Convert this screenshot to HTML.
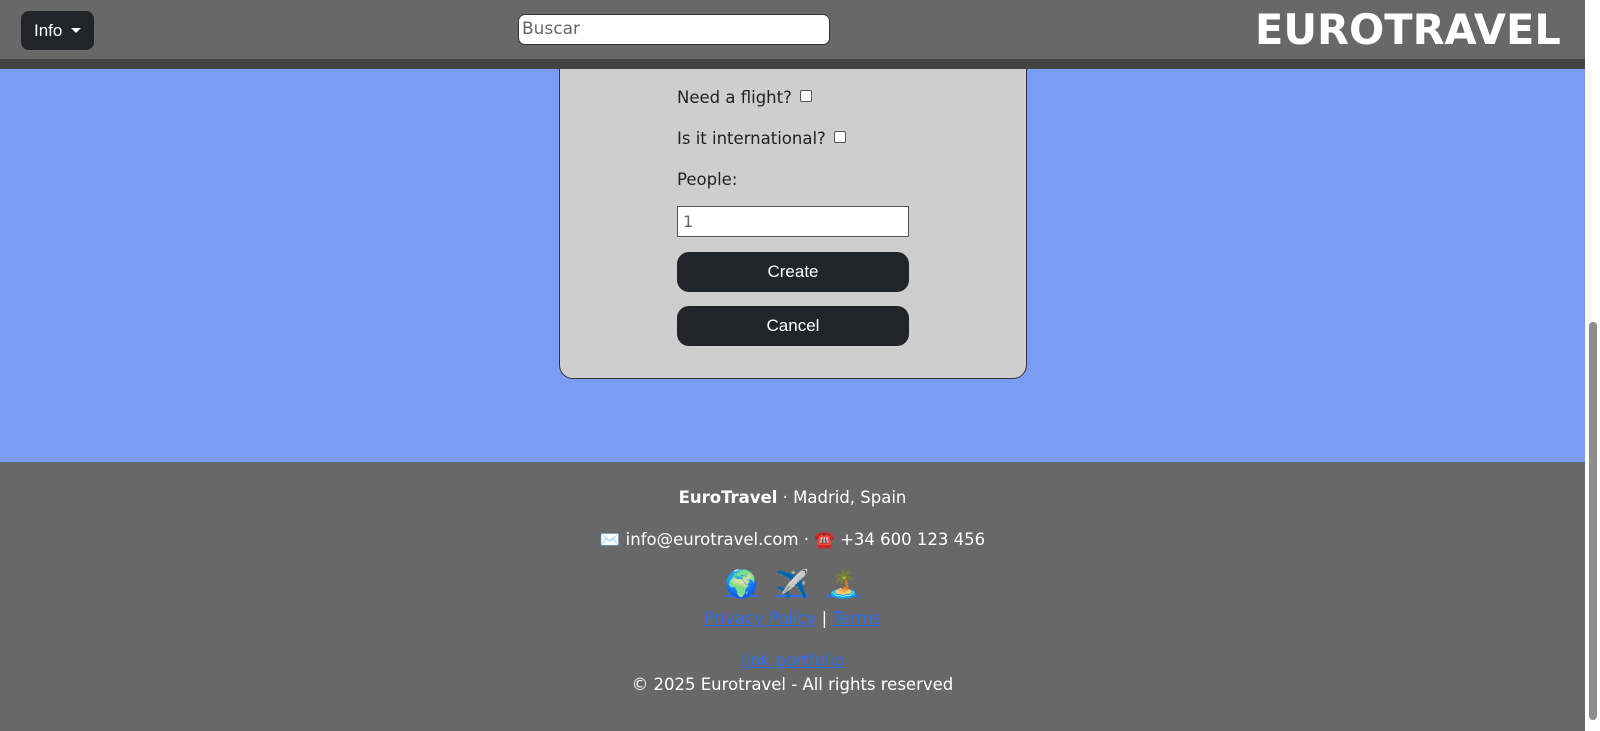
<!DOCTYPE html>
<html><head><meta charset="utf-8"><style>
*{box-sizing:border-box;margin:0;padding:0}
body{width:1600px;height:731px;overflow:hidden;position:relative;background:#7a9cf7;font-family:"DejaVu Sans",Verdana,sans-serif;}
.hdr{position:absolute;left:0;top:0;width:1585px;height:59px;background:#686868;z-index:2}
.band{position:absolute;left:0;top:59px;width:1585px;height:10px;background:#444;z-index:2}
.info{position:absolute;z-index:3;left:21px;top:11px;width:73px;height:39px;background:#212529;border-radius:8px;color:#fff;font:17px "Liberation Sans",Arial,sans-serif;line-height:39px;padding-left:13px}
.info:after{content:"";position:absolute;left:50px;top:17px;border:5px solid transparent;border-top:5px solid #fff;border-bottom:0}
.search{position:absolute;z-index:3;left:518px;top:14px;width:312px;height:31px;background:#fff;border:1px solid #333;border-radius:7px;color:#666;font-size:17px;line-height:29px;padding-left:3px}
.logo{position:absolute;z-index:3;left:1255px;top:5px;color:#fff;font:bold 41.5px "DejaVu Sans",Verdana,sans-serif;letter-spacing:0}
.card{position:absolute;left:559px;top:20px;width:468px;height:359px;background:#cecece;border:1.5px solid #333;border-radius:14px}
.t{position:absolute;left:677px;font-size:16.5px;color:#222}
.cb{display:inline-block;width:12px;height:12px;border:1px solid #555;border-radius:2px;background:#fff;vertical-align:1px;margin-left:8px}
.inp{position:absolute;left:677px;top:206px;width:232px;height:31px;background:#fff;border:1px solid #555;color:#666;font-size:16px;line-height:29px;padding-left:5px}
.btn{position:absolute;left:677px;width:232px;height:40px;background:#212529;border-radius:12px;color:#fff;text-align:center;font:17px "Liberation Sans",Arial,sans-serif;line-height:40px}
.ft{position:absolute;left:0;top:462px;width:1585px;height:269px;background:#686868;color:#fff;text-align:center;font-size:16.5px}
.ft div{position:absolute;left:0;width:100%}
a{color:#2f6ff0;text-decoration:underline}
.sb{position:absolute;left:1585px;top:0;width:15px;height:731px;background:#fff}
.thumb{position:absolute;left:1589px;top:322px;width:8px;height:398px;background:#8d8d8d;border-radius:4px}
</style></head><body>
<div class="hdr"></div><div class="band"></div>
<div class="info">Info</div>
<div class="search">Buscar</div>
<div class="logo">EUROTRAVEL</div>
<div class="card"></div>
<div class="t" style="top:88px">Need a flight?<span class="cb"></span></div>
<div class="t" style="top:129px">Is it international?<span class="cb"></span></div>
<div class="t" style="top:170px">People:</div>
<div class="inp">1</div>
<div class="btn" style="top:252px">Create</div>
<div class="btn" style="top:306px">Cancel</div>
<div class="ft">
<div style="top:26px"><b>EuroTravel</b> · Madrid, Spain</div>
<div style="top:68px">✉️ info@eurotravel.com · ☎️ +34 600 123 456</div>
<div style="top:106px;font-size:27px"><a>🌍</a>&nbsp; <a>✈️</a>&nbsp; <a>🏝️</a></div>
<div style="top:147px"><a>Privacy Policy</a> | <a>Terms</a></div>
<div style="top:189px"><a>link portfolio</a></div>
<div style="top:213px">© 2025 Eurotravel - All rights reserved</div>
</div>
<div class="sb"></div><div class="thumb"></div>
</body></html>
